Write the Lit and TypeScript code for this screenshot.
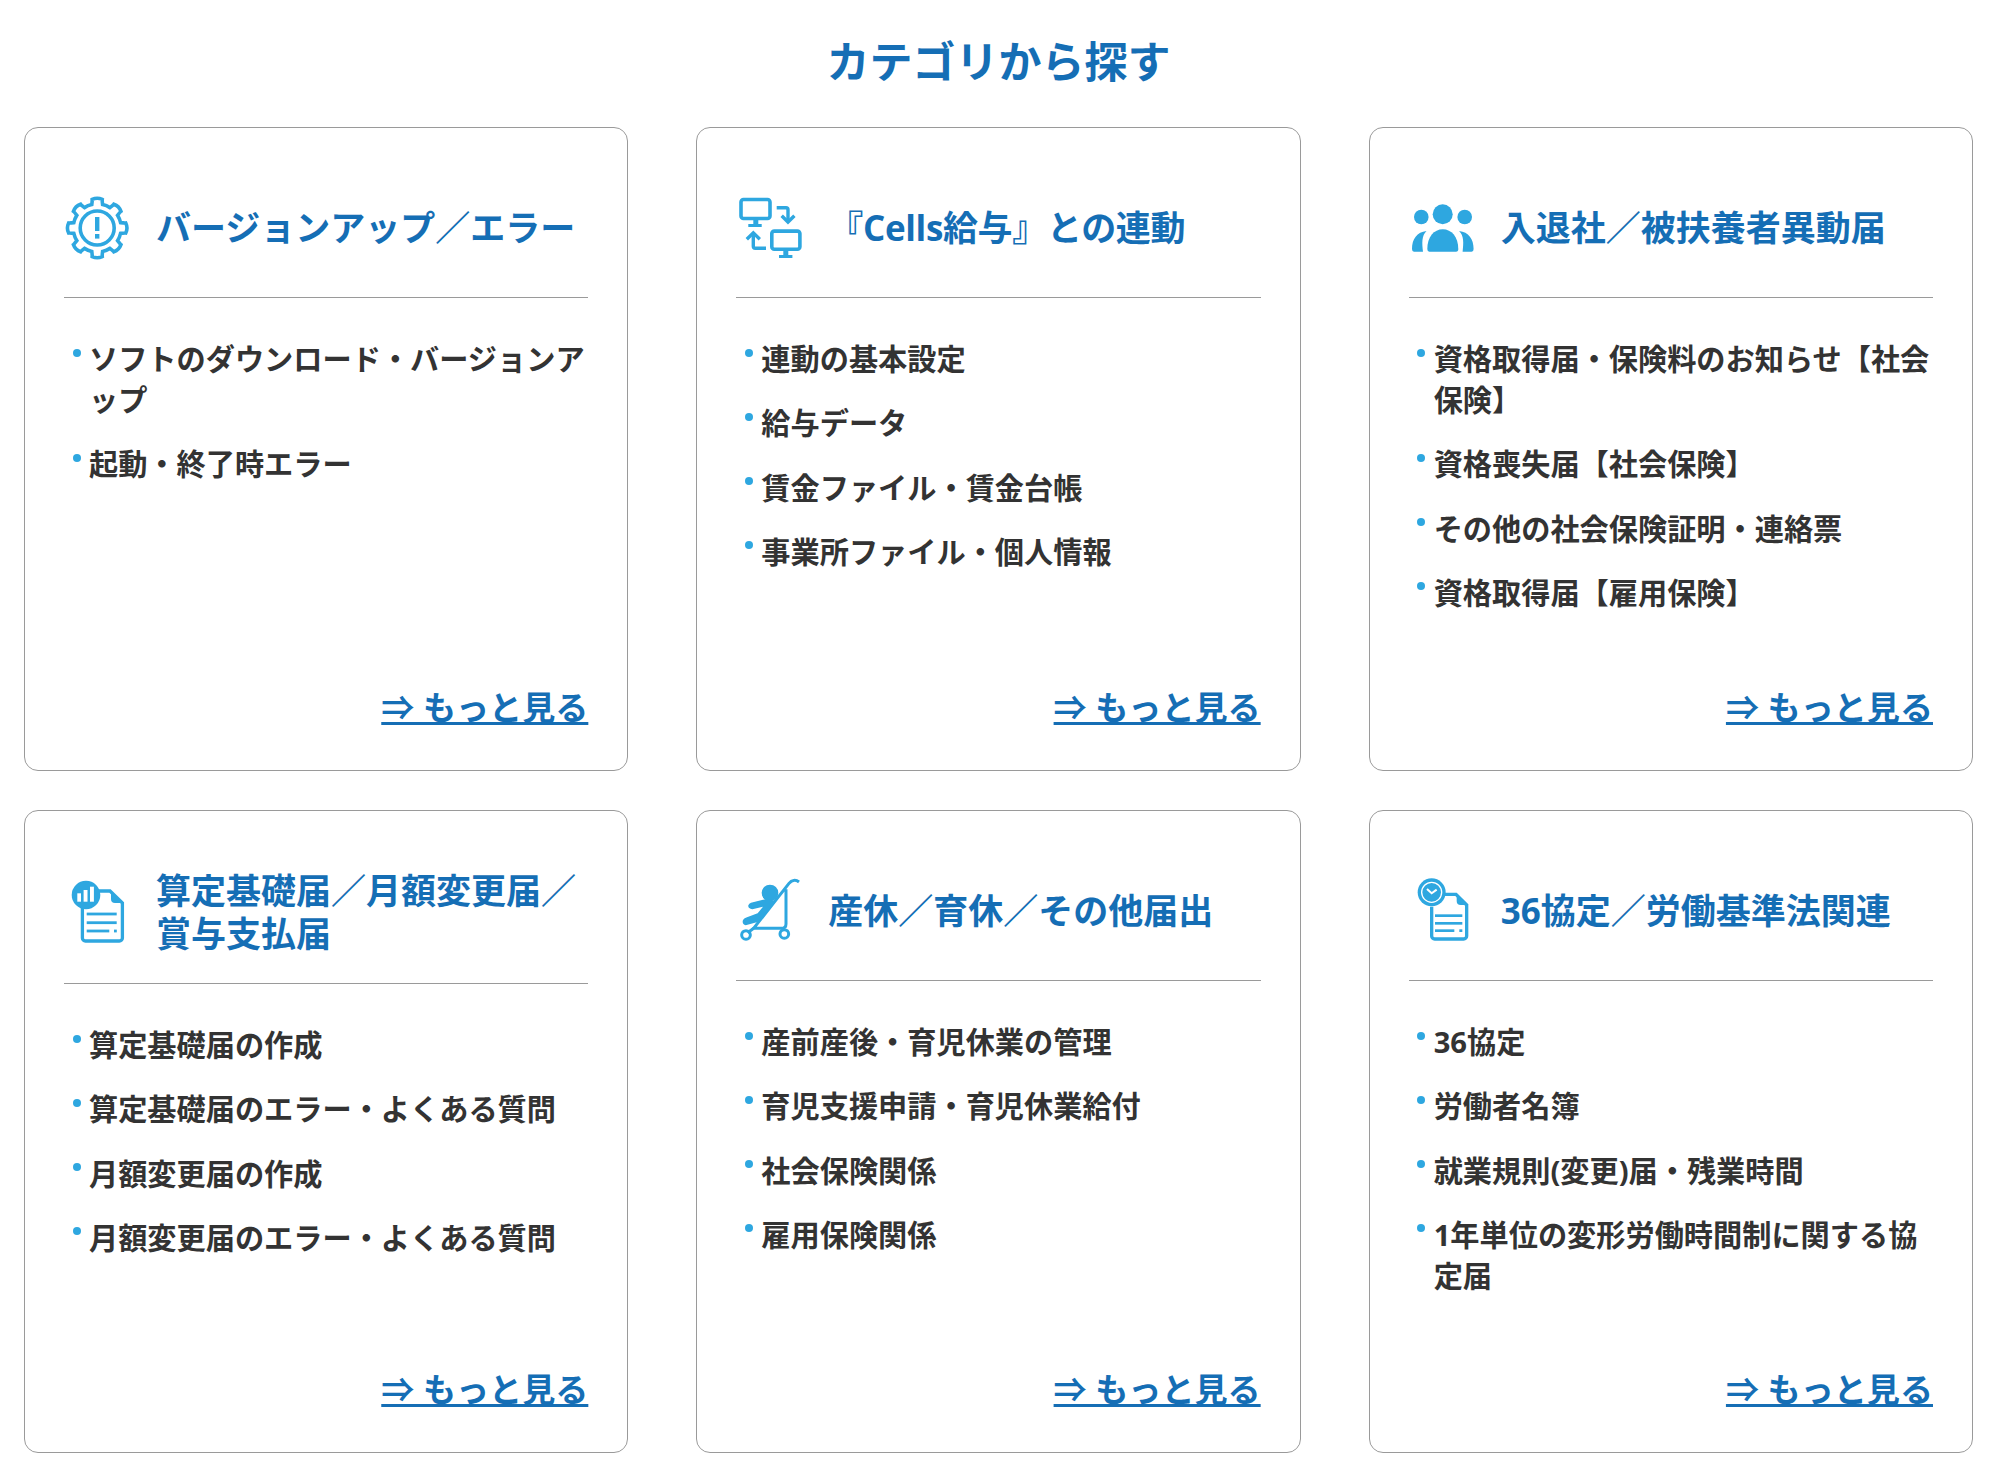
import { LitElement, html, svg, css } from "lit";
import { customElement } from "lit/decorators.js";

const gearPath = () => {
  const pts: string[] = [];
  const pt = (r: number, deg: number) => {
    const a = ((deg - 90) * Math.PI) / 180;
    return `${(33.2 + r * Math.cos(a)).toFixed(2)} ${(41 + r * Math.sin(a)).toFixed(2)}`;
  };
  for (let i = 0; i < 8; i++) {
    const t = i * 45;
    const start = pt(24, t - 13);
    pts.push(i === 0 ? `M${start}` : `A24 24 0 0 1 ${start}`);
    pts.push(`Q${pt(28, t - 10)} ${pt(29, t - 10)}`);
    pts.push(`Q${pt(31, t)} ${pt(29, t + 10)}`);
    pts.push(`Q${pt(28, t + 10)} ${pt(24, t + 13)}`);
  }
  return pts.join(" ") + " A24 24 0 0 1 " + pt(24, -13) + "Z";
};

const gear = svg`
  <path d=${gearPath()} class="line" stroke-width="3.6"/>
  <circle cx="33.2" cy="41" r="17" class="line" stroke-width="3.6"/>
  <rect x="31" y="30" width="4.4" height="14" class="fill"/>
  <rect x="31" y="47" width="4.4" height="4.6" class="fill"/>`;

const monitors = svg`
  <rect x="5" y="12.5" width="29" height="19" rx="2.5" class="line" stroke-width="3.6"/>
  <rect x="17.3" y="33" width="5" height="5" class="fill"/>
  <rect x="12.3" y="37" width="13.4" height="3" class="fill"/>
  <rect x="35.8" y="44.1" width="28.1" height="18.1" rx="2.5" class="line" stroke-width="3.6"/>
  <rect x="47.3" y="64" width="5" height="5" class="fill"/>
  <rect x="43" y="68" width="13.4" height="3" class="fill"/>
  <path d="M40.7 20.7H50a2 2 0 0 1 2 2V34" class="line" stroke-width="3.4"/>
  <path d="M45.7 28.7L52 35l6.4-6.3" class="line" stroke-width="3.4"/>
  <path d="M30 61.3H19.3a2 2 0 0 1-2-2V47" class="line" stroke-width="3.4"/>
  <path d="M10.8 52.3l6.5-6.5 6.5 6.5" class="line" stroke-width="3.4"/>`;

const people = svg`
  <circle cx="33.7" cy="27.3" r="10" class="fill"/>
  <circle cx="12.3" cy="30" r="7.3" class="fill"/>
  <circle cx="55.7" cy="30" r="7.3" class="fill"/>
  <path d="M20.3 64.7Q18.3 64.7 18.3 62C18.3 50 25 42.3 33.8 42.3C42.5 42.3 49.3 50 49.3 62Q49.3 64.7 47 64.7Z" class="fill"/>
  <path d="M5 64.7Q3 64.7 3 62C3 52 8 45 17.5 44C12.5 49 13 56 14 64.7Z" class="fill"/>
  <path d="M62.6 64.7Q64.6 64.7 64.6 62C64.6 52 59.6 45 50.1 44C55.1 49 54.6 56 53.6 64.7Z" class="fill"/>`;

const chartDoc = svg`
  <path d="M30 19H46L58.4 31V66a3 3 0 0 1-3 3H21.4a3 3 0 0 1-3-3V34" class="line" stroke-width="3.3"/>
  <path d="M47 19L59 31H51a4 4 0 0 1-4-4Z" class="fill"/>
  <circle cx="22" cy="23" r="14.3" class="fill"/>
  <rect x="13.3" y="21.3" width="3.7" height="8.4" fill="#fff"/>
  <rect x="19.6" y="18" width="3.9" height="11.7" fill="#fff"/>
  <rect x="26" y="14.7" width="3.9" height="15" fill="#fff"/>
  <rect x="22.7" y="40.6" width="30" height="2.8" class="fill"/>
  <rect x="22.7" y="49.3" width="30" height="2.8" class="fill"/>
  <rect x="22.7" y="57.6" width="22.6" height="2.8" class="fill"/>
  <rect x="50" y="57.6" width="2.8" height="2.8" class="fill"/>`;

const stroller = svg`
  <g transform="translate(-11 -10) scale(.3333)">
    <path d="M222 66C212 58 200 60 192 70L86 205H170Q183 205 183 192V88" class="line" stroke-width="9"/>
    <path d="M86 205L68 218" class="line" stroke-width="9"/>
    <circle cx="63" cy="225" r="13" class="line" stroke-width="9"/>
    <circle cx="178" cy="222" r="13" class="line" stroke-width="9"/>
    <circle cx="135" cy="99" r="25" class="fill"/>
    <path d="M78 128L128 116L152 124L98 186L62 196Q50 192 54 180Q58 174 66 172L98 160L114 140L82 148Q68 146 70 136Q72 130 78 128Z" class="fill"/>
  </g>`;

const clockDoc = svg`
  <g transform="translate(-9 -10) scale(.3333)">
    <path d="M130 103H168L200 135V228a9 9 0 0 1-9 9H104a9 9 0 0 1-9-9V140" class="line" stroke-width="10"/>
    <path d="M170 100L205 135H182a12 12 0 0 1-12-12Z" class="fill"/>
    <circle cx="95" cy="97" r="42" class="fill"/>
    <circle cx="95" cy="97" r="30" fill="none" stroke="#fff" stroke-width="4"/>
    <path d="M81 87L95 100L110 89" fill="none" stroke="#fff" stroke-width="6"/>
    <rect x="105" y="163" width="82" height="8" class="fill"/>
    <rect x="105" y="186" width="82" height="8" class="fill"/>
    <rect x="105" y="208" width="58" height="8" class="fill"/>
    <rect x="178" y="208" width="9" height="8" class="fill"/>
  </g>`;

const cards = [
  { icon: gear, title: "バージョンアップ／エラー", items: ["ソフトのダウンロード・バージョンアップ", "起動・終了時エラー"] },
  { icon: monitors, title: "『Cells給与』との連動", tight: true, items: ["連動の基本設定", "給与データ", "賃金ファイル・賃金台帳", "事業所ファイル・個人情報"] },
  { icon: people, title: "入退社／被扶養者異動届", items: ["資格取得届・保険料のお知らせ【社会保険】", "資格喪失届【社会保険】", "その他の社会保険証明・連絡票", "資格取得届【雇用保険】"] },
  { icon: chartDoc, title: "算定基礎届／月額変更届／賞与支払届", items: ["算定基礎届の作成", "算定基礎届のエラー・よくある質問", "月額変更届の作成", "月額変更届のエラー・よくある質問"] },
  { icon: stroller, title: "産休／育休／その他届出", items: ["産前産後・育児休業の管理", "育児支援申請・育児休業給付", "社会保険関係", "雇用保険関係"] },
  { icon: clockDoc, title: "36協定／労働基準法関連", items: ["36協定", "労働者名簿", "就業規則(変更)届・残業時間", "1年単位の変形労働時間制に関する協定届"] },
];

@customElement("app-root")
export class AppRoot extends LitElement {
  static styles = css`
    :host {
      display: block;
      background: #fff;
      font-family: "Open Sans", "Noto Sans CJK JP", sans-serif;
      font-weight: 700;
      color: #333;
      line-break: loose;
      padding-bottom: 18px;
    }

    h1 {
      margin: 0;
      padding: 38px 0 41px;
      font-size: 43px;
      line-height: 48px;
      font-weight: 700;
      text-align: center;
      color: #156eb5;
    }

    .grid {
      display: grid;
      grid-template-columns: repeat(3, 1fr);
      grid-template-rows: 644px 643px;
      gap: 39px 68px;
      padding: 0 24px;
    }

    .card {
      display: flex;
      flex-direction: column;
      box-sizing: border-box;
      padding: 59px 39px 39.5px;
      border: 1px solid #9a9a9a;
      border-radius: 14px;
    }

    .head {
      display: flex;
      align-items: center;
      min-height: 82px;
      padding-bottom: 28px;
      border-bottom: 1px solid #9a9a9a;
    }

    .icon {
      flex: none;
      width: 92px;
      height: 82px;
    }

    .icon svg {
      display: block;
    }

    .line {
      fill: none;
      stroke: #2ea7e0;
    }

    .fill {
      fill: #2ea7e0;
    }

    h2 {
      margin: 0;
      font-size: 35px;
      line-height: 42.5px;
      font-weight: 700;
      color: #156eb5;
    }

    h2.tight {
      letter-spacing: -0.35px;
    }

    ul {
      list-style: none;
      margin: 0;
      padding: 41px 0 0;
    }

    li {
      position: relative;
      padding-left: 25px;
      margin-bottom: 23.3px;
      font-size: 29.2px;
      line-height: 41px;
    }

    li::before {
      content: "";
      position: absolute;
      left: 8.5px;
      top: 9.5px;
      width: 8px;
      height: 8px;
      border-radius: 50%;
      background: #2ea7e0;
    }

    .more {
      margin-top: auto;
      align-self: flex-end;
      font-size: 33.1px;
      line-height: 46px;
      color: #156eb5;
      text-decoration: underline;
      text-decoration-thickness: 3px;
    }
  `;

  render() {
    return html`
      <h1>カテゴリから探す</h1>
      <div class="grid">
        ${cards.map(
          (c) => html`
            <section class="card">
              <div class="head">
                <div class="icon">
                  <svg width="80" height="82" viewBox="0 0 80 82">${c.icon}</svg>
                </div>
                <h2 class=${c.tight ? "tight" : ""}>${c.title}</h2>
              </div>
              <ul>
                ${c.items.map((i) => html`<li>${i}</li>`)}
              </ul>
              <a class="more">⇒ もっと見る</a>
            </section>
          `
        )}
      </div>
    `;
  }
}
